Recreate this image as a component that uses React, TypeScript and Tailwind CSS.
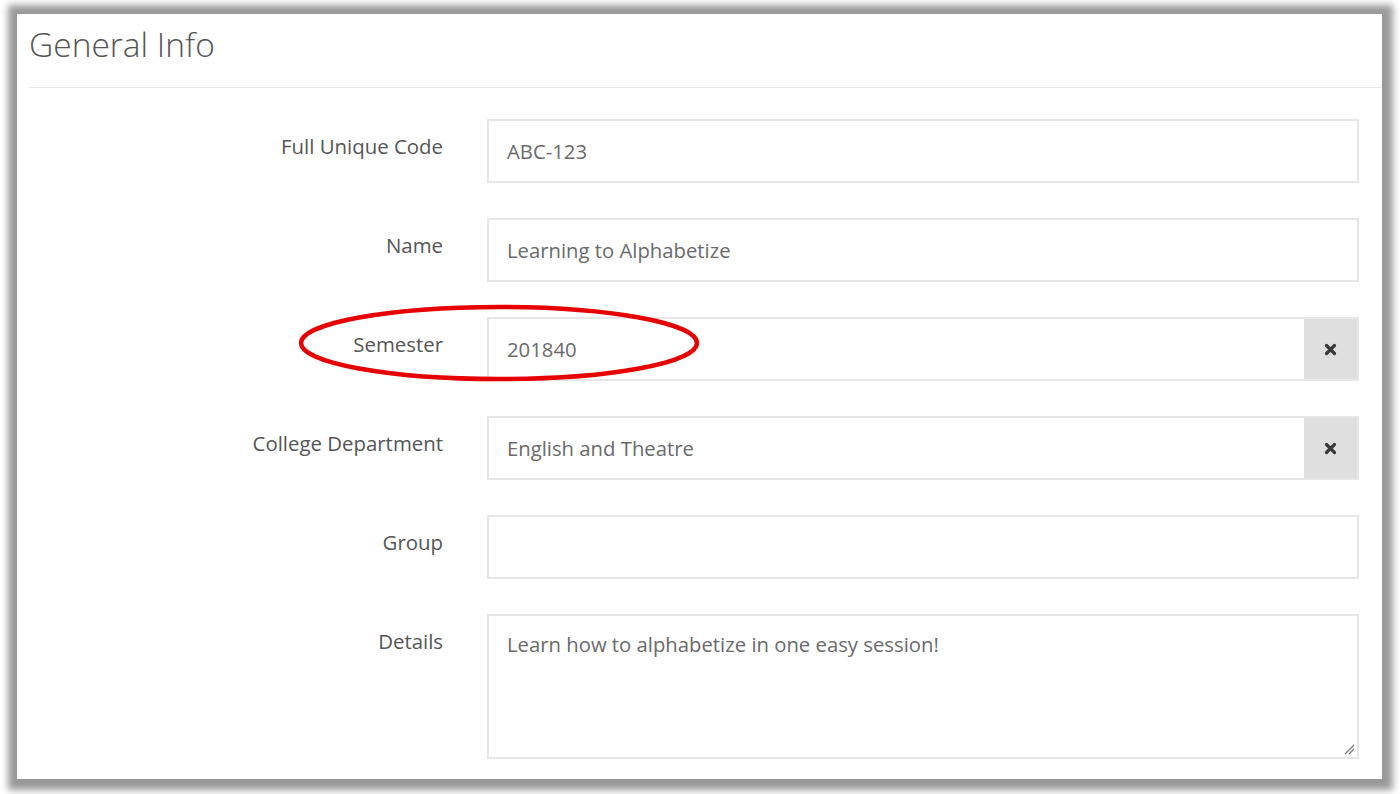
import React from "react";

const font = { fontFamily: '"Open Sans", "Noto Sans", Arial, sans-serif' };

function ClearBtn() {
  return (
    <div className="flex w-[53px] shrink-0 items-center justify-center bg-[#dfdfdf]">
      <svg width="13" height="13" viewBox="0 0 12 12">
        <path d="M2.3 2.3 L9.7 9.7 M9.7 2.3 L2.3 9.7" stroke="#3a3a3a" strokeWidth="3" strokeLinecap="round" />
      </svg>
    </div>
  );
}

function Row({ label, children, tall }: { label: string; children: React.ReactNode; tall?: boolean }) {
  return (
    <div className="flex">
      <div className="w-[426px] shrink-0 pt-[13px] text-right text-[20.4px] leading-[28px] text-[#555]">{label}</div>
      <div className={`ml-[44px] w-[872px] ${tall ? "h-[145px]" : "h-[64px]"}`}>{children}</div>
    </div>
  );
}

function Field({ value, clear }: { value: string; clear?: boolean }) {
  return (
    <div className="flex h-full border-2 border-[#e6e6e6] bg-white">
      <div className="flex-1 pl-[18px] pt-[16px] text-[20.3px] leading-[28px] text-[#6a6a6a]">{value}</div>
      {clear && <ClearBtn />}
    </div>
  );
}

export default function App() {
  return (
    <div className="h-[794px] w-[1400px] overflow-hidden bg-white pl-[17px] pt-[14px]" style={font}>
      <div className="relative h-[765px] w-[1365px] bg-white shadow-[1px_1px_7px_10px_rgba(0,0,0,0.4)]">
        <div className="pl-[12px] pt-[10px] text-[33.5px] font-light leading-[40px] text-[#555]">General Info</div>
        <div className="ml-[12px] mt-[23px] h-px bg-[#e8e8e8]" />
        <div className="mt-[31px] flex flex-col gap-[35px]">
          <Row label="Full Unique Code">
            <Field value="ABC-123" />
          </Row>
          <Row label="Name">
            <Field value="Learning to Alphabetize" />
          </Row>
          <Row label="Semester">
            <Field value="201840" clear />
          </Row>
          <Row label="College Department">
            <Field value="English and Theatre" clear />
          </Row>
          <Row label="Group">
            <Field value="" />
          </Row>
          <Row label="Details" tall>
            <div className="relative h-full border-2 border-[#e6e6e6] bg-white">
              <div className="pl-[18px] pt-[14px] text-[20.3px] leading-[28px] text-[#6a6a6a]">
                Learn how to alphabetize in one easy session!
              </div>
              <svg className="absolute bottom-[2px] right-[2px]" width="12" height="12" viewBox="0 0 12 12">
                <path d="M2 11 L11 2 M6 11 L11 6" stroke="#777" strokeWidth="1.2" />
              </svg>
            </div>
          </Row>
        </div>
        <svg className="pointer-events-none absolute left-[281px] top-[290px]" width="404" height="80" viewBox="0 0 404 80">
          <ellipse cx="201" cy="39" rx="198" ry="36" fill="none" stroke="#e60000" strokeWidth="4.5" />
        </svg>
      </div>
    </div>
  );
}
